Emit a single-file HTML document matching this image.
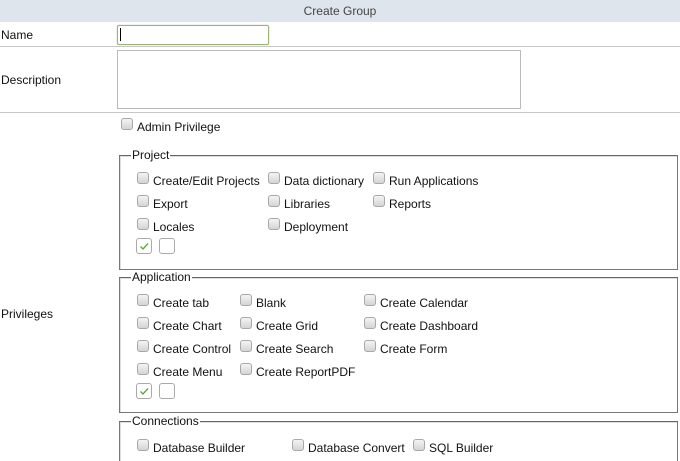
<!DOCTYPE html>
<html style="overflow:hidden;height:461px"><head><style>
body{margin:0;width:680px;height:461px;overflow:hidden;background:#fff;font-family:"Liberation Sans",sans-serif;font-size:12px;color:#111;position:relative}
.a{position:absolute;white-space:nowrap}
.cb{position:absolute;width:10px;height:10px;border:1px solid #a8a8a8;border-radius:3px;background:linear-gradient(#f4f4f4,#d4d4d4)}
.t{position:absolute;white-space:nowrap;line-height:14px}
.fs{position:absolute;border:1px solid #777;border-top:1px solid #666;box-shadow:inset 1px 1px 0 #ddd}
.lg{position:absolute;background:#fff;padding:0 1px;line-height:14px}
.bx{position:absolute;width:14px;height:14px;border:1px solid #aaa;border-radius:3px;background:#fff}
.hr{position:absolute;left:0;width:680px;height:1px;background:#c8c8c8}
</style></head><body>
<div class="a" style="left:0;top:0;width:680px;height:22px;background:#dfe5ed;text-align:center;line-height:22px;color:#444">Create Group</div>
<div class="t" style="left:1px;top:28px">Name</div>
<div class="a" style="left:117px;top:25px;width:150px;height:18px;border:1px solid #9bb47a;border-radius:2px;box-shadow:0 0 1px #9bb47a"></div>
<div class="a" style="left:120px;top:28px;width:1px;height:13px;background:#000"></div>
<div class="hr" style="top:46px"></div>
<div class="t" style="left:1px;top:73px">Description</div>
<div class="a" style="left:117px;top:50px;width:402px;height:57px;border:1px solid #bbb"></div>
<div class="hr" style="top:112px"></div>
<div class="t" style="left:1px;top:307px">Privileges</div>
<div class="cb" style="left:121px;top:118px"></div><div class="t" style="left:137px;top:120px">Admin Privilege</div>

<div class="fs" style="left:119px;top:155px;width:557px;height:113px"></div>
<div class="lg" style="left:131px;top:148px">Project</div>
<div class="cb" style="left:137px;top:172px"></div><div class="t" style="left:153px;top:174px">Create/Edit Projects</div>
<div class="cb" style="left:268px;top:172px"></div><div class="t" style="left:284px;top:174px">Data dictionary</div>
<div class="cb" style="left:373px;top:172px"></div><div class="t" style="left:389px;top:174px">Run Applications</div>
<div class="cb" style="left:137px;top:195px"></div><div class="t" style="left:153px;top:197px">Export</div>
<div class="cb" style="left:268px;top:195px"></div><div class="t" style="left:284px;top:197px">Libraries</div>
<div class="cb" style="left:373px;top:195px"></div><div class="t" style="left:389px;top:197px">Reports</div>
<div class="cb" style="left:137px;top:218px"></div><div class="t" style="left:153px;top:220px">Locales</div>
<div class="cb" style="left:268px;top:218px"></div><div class="t" style="left:284px;top:220px">Deployment</div>
<div class="bx" style="left:136px;top:238px"><svg width="14" height="14"><path d="M3.5 7.5l2.5 2.5 5-5.5" stroke="#5cab3c" stroke-width="1.4" fill="none"/></svg></div>
<div class="bx" style="left:159px;top:238px"></div>

<div class="fs" style="left:119px;top:277px;width:557px;height:134px"></div>
<div class="lg" style="left:131px;top:270px">Application</div>
<div class="cb" style="left:137px;top:294px"></div><div class="t" style="left:153px;top:296px">Create tab</div>
<div class="cb" style="left:240px;top:294px"></div><div class="t" style="left:256px;top:296px">Blank</div>
<div class="cb" style="left:364px;top:294px"></div><div class="t" style="left:380px;top:296px">Create Calendar</div>
<div class="cb" style="left:137px;top:317px"></div><div class="t" style="left:153px;top:319px">Create Chart</div>
<div class="cb" style="left:240px;top:317px"></div><div class="t" style="left:256px;top:319px">Create Grid</div>
<div class="cb" style="left:364px;top:317px"></div><div class="t" style="left:380px;top:319px">Create Dashboard</div>
<div class="cb" style="left:137px;top:340px"></div><div class="t" style="left:153px;top:342px">Create Control</div>
<div class="cb" style="left:240px;top:340px"></div><div class="t" style="left:256px;top:342px">Create Search</div>
<div class="cb" style="left:364px;top:340px"></div><div class="t" style="left:380px;top:342px">Create Form</div>
<div class="cb" style="left:137px;top:363px"></div><div class="t" style="left:153px;top:365px">Create Menu</div>
<div class="cb" style="left:240px;top:363px"></div><div class="t" style="left:256px;top:365px">Create ReportPDF</div>
<div class="bx" style="left:136px;top:383px"><svg width="14" height="14"><path d="M3.5 7.5l2.5 2.5 5-5.5" stroke="#5cab3c" stroke-width="1.4" fill="none"/></svg></div>
<div class="bx" style="left:159px;top:383px"></div>

<div class="fs" style="left:119px;top:421px;width:557px;height:45px;border-bottom:none"></div>
<div class="lg" style="left:131px;top:414px">Connections</div>
<div class="cb" style="left:137px;top:439px"></div><div class="t" style="left:153px;top:441px">Database Builder</div>
<div class="cb" style="left:292px;top:439px"></div><div class="t" style="left:308px;top:441px">Database Convert</div>
<div class="cb" style="left:413px;top:439px"></div><div class="t" style="left:429px;top:441px">SQL Builder</div>
</body></html>
